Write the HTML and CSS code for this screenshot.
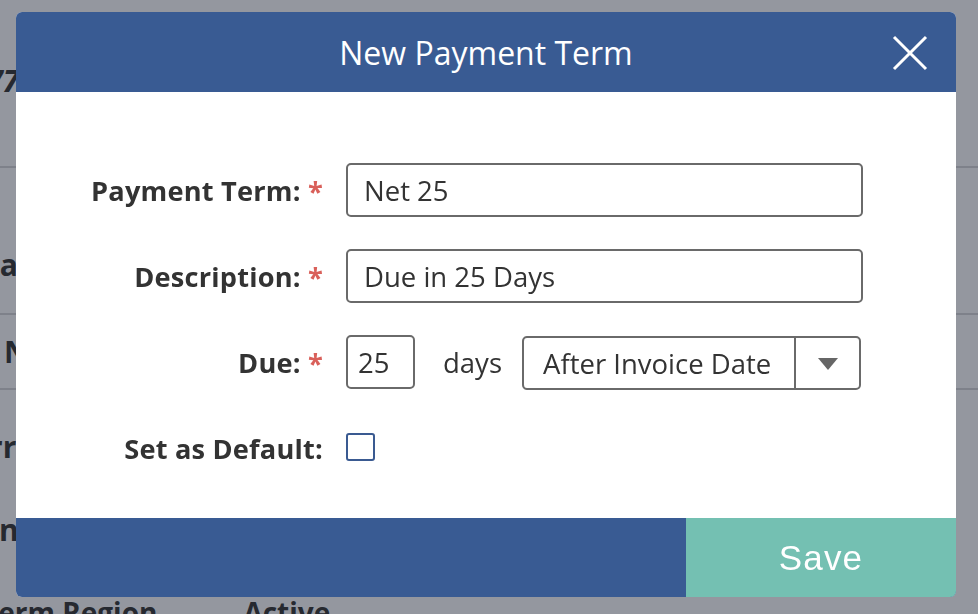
FILE: index.html
```html
<!DOCTYPE html>
<html lang="en">
<head>
<meta charset="utf-8">
<title>New Payment Term</title>
<link rel="stylesheet" href="styles.css">
</head>
<body>
<div class="page">
  <div class="bg-row bg-row-top"><span class="bg-text bg-amount">$4,777</span></div>
  <div class="bg-row bg-row-head"><span class="bg-text bg-head">Pa</span></div>
  <div class="bg-row bg-row-n"><span class="bg-text bg-n">N</span></div>
  <div class="bg-row bg-row-plain">
    <span class="bg-text bg-rn">Terr</span>
    <span class="bg-text bg-ne">Line</span>
    <div class="bg-cols"><span class="bg-text bg-col1">Term Region</span><span class="bg-text bg-col2">Active</span></div>
  </div>
</div>

<div class="modal">
  <div class="modal-header">
    <h1 class="modal-title">New Payment Term</h1>
    <button class="close-btn" aria-label="Close">
      <svg width="36" height="36" viewBox="0 0 36 36"><path d="M2 2 L34 34 M34 2 L2 34" stroke="#fff" stroke-width="3" fill="none"/></svg>
    </button>
  </div>
  <div class="modal-body">
    <div class="form-grid">
      <label class="form-label">Payment Term: <span class="req">*</span></label>
      <div class="field"><div class="input input-wide">Net 25</div></div>

      <label class="form-label">Description: <span class="req">*</span></label>
      <div class="field"><div class="input input-wide">Due in 25 Days</div></div>

      <label class="form-label">Due: <span class="req">*</span></label>
      <div class="field due-field">
        <div class="input input-num">25</div>
        <span class="days">days</span>
        <div class="select">
          <span class="select-value">After Invoice Date</span>
          <span class="select-arrow"><svg width="20" height="12" viewBox="0 0 20 12"><path d="M0 0 H20 L10 12 Z" fill="#666"/></svg></span>
        </div>
      </div>

      <label class="form-label">Set as Default:</label>
      <div class="field"><span class="checkbox"></span></div>
    </div>
  </div>
  <div class="modal-footer">
    <div class="footer-space"></div>
    <button class="save-btn">Save</button>
  </div>
</div>
</body>
</html>
```
FILE: styles.css
```css
* { box-sizing: border-box; }
html, body { margin: 0; padding: 0; }
body {
  width: 978px;
  height: 614px;
  overflow: hidden;
  background: #94979f;
  font-family: "Open Sans", "Noto Sans", sans-serif;
  color: #2b2e36;
}

/* background page (dimmed) */
.page { width: 978px; }
.bg-row { border-bottom: 2px solid #7e818a; }
.bg-text { font-weight: 700; font-size: 30px; color: #262930; white-space: nowrap; display: inline-block; }
.bg-row-top { height: 168px; padding-top: 60px; }
.bg-amount { font-style: italic; margin-left: -72px; }
.bg-row-head { height: 147px; padding-top: 76px; }
.bg-head { margin-left: -19px; }
.bg-row-n { height: 75px; padding-top: 16px; }
.bg-n { margin-left: 4px; }
.bg-row-plain { border-bottom: none; padding-top: 36px; }
.bg-rn { display: block; margin-left: -46px; }
.bg-ne { display: block; margin-left: -27px; margin-top: 42px; }
.bg-cols { display: flex; gap: 86px; margin-top: 43px; margin-left: -18px; }
.bg-col1, .bg-col2 { font-size: 28px; }

/* modal */
.modal {
  position: fixed;
  left: 16px;
  top: 12px;
  width: 940px;
  height: 585px;
  background: #fff;
  border-radius: 6px;
  overflow: hidden;
  display: flex;
  flex-direction: column;
}
.modal-header {
  height: 80px;
  background: #395b93;
  display: flex;
  align-items: center;
  justify-content: center;
  position: relative;
}
.modal-title {
  margin: 0;
  font-size: 32px;
  font-weight: 400;
  color: #fff;
}
.close-btn {
  position: absolute;
  right: 28px;
  top: 23px;
  width: 36px;
  height: 36px;
  padding: 0;
  border: 0;
  background: none;
  display: flex;
}

.modal-body {
  flex: 1;
  padding: 71px 0 0 0;
}
.form-grid {
  display: grid;
  grid-template-columns: 309px 1fr;
  grid-auto-rows: 54px;
  column-gap: 21px;
  row-gap: 32px;
}
.form-label {
  display: flex;
  align-items: center;
  justify-content: flex-end;
  font-weight: 700;
  font-size: 27.2px;
  letter-spacing: 0.2px;
  color: #333;
  white-space: pre;
  padding-right: 2px;
}
.req { color: #d9605a; }
.field { display: flex; align-items: center; }
.input {
  height: 54px;
  border: 2px solid #6a6a6a;
  border-radius: 5px;
  font-size: 27.5px;
  color: #333;
  display: flex;
  align-items: center;
  padding-left: 16px;
}
.input-wide { width: 517px; }
.input-num { width: 69px; padding-left: 10px; }
.days { font-size: 27.5px; color: #333; margin-left: 28px; margin-right: 20px; }
.select {
  width: 339px;
  height: 54px;
  border: 2px solid #6a6a6a;
  border-radius: 5px;
  display: flex;
  margin-top: 2px;
}
.select-value {
  flex: 1;
  font-size: 27.5px;
  color: #333;
  display: flex;
  align-items: center;
  padding-left: 19px;
  white-space: nowrap;
  overflow: hidden;
  border-right: 2px solid #6a6a6a;
}
.select-arrow {
  width: 63px;
  display: flex;
  align-items: center;
  justify-content: center;
  padding-top: 2px;
}
.checkbox {
  width: 29px;
  height: 28px;
  border: 2px solid #3a5a91;
  border-radius: 3px;
  margin-top: -2px;
}

.modal-footer {
  height: 79px;
  display: flex;
  background: #395b93;
}
.footer-space { flex: 1; }
.save-btn {
  width: 270px;
  border: 0;
  background: #74c0b2;
  color: #fff;
  font-family: "Liberation Sans", Arial, sans-serif;
  font-size: 35px;
  letter-spacing: 1.2px;
  padding: 0;
}
```
